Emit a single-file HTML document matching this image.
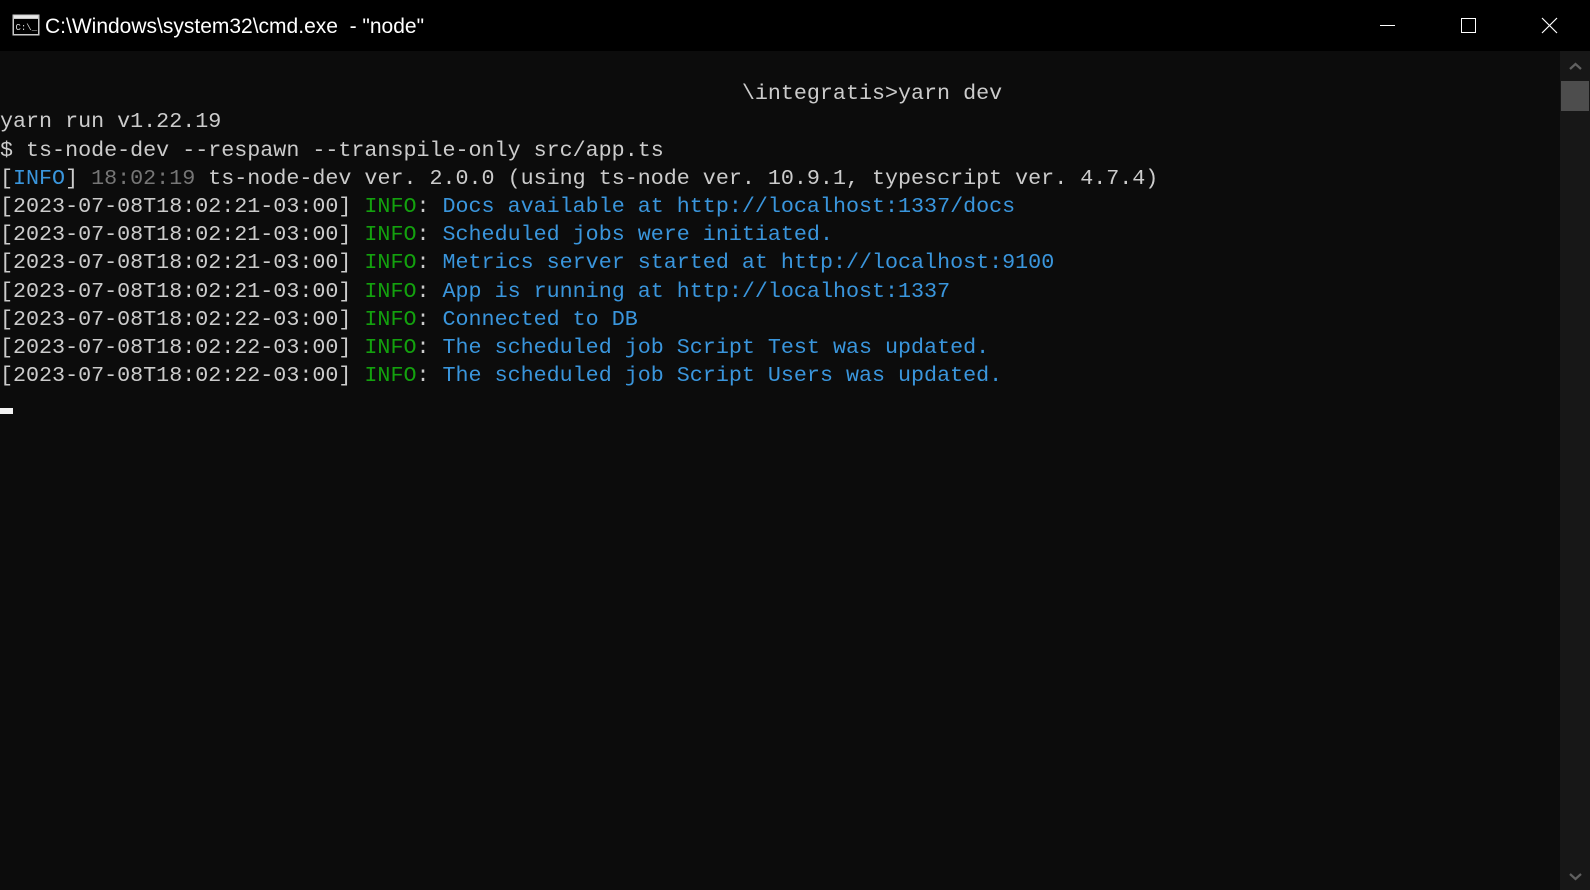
<!DOCTYPE html>
<html><head><meta charset="utf-8"><style>
html,body{margin:0;padding:0;width:1590px;height:890px;overflow:hidden;background:#0c0c0c;}
#title{position:absolute;left:0;top:0;width:1590px;height:51px;background:#000;}
#title .t{position:absolute;left:45px;top:15px;font:21px "Liberation Sans",sans-serif;color:#fff;white-space:pre;}
#term{position:absolute;left:0;top:51px;width:1560px;height:839px;background:#0c0c0c;}
pre{margin:0;position:absolute;left:0;top:1px;font-family:"Liberation Mono",monospace;font-size:21.7px;line-height:28.2px;color:#cccccc;}
.g{color:#13a10e}.b{color:#3a96dd}.d{color:#767676}
#sb{position:absolute;left:1560px;top:51px;width:30px;height:839px;background:#171717;}
#thumb{position:absolute;left:1561px;top:81px;width:28px;height:30px;background:#4d4d4d;}
#cur{position:absolute;left:0;top:408px;width:13px;height:6px;background:#f2f2f2;}
</style></head><body>
<div id="title">
<svg style="position:absolute;left:12px;top:14px" width="28" height="22" viewBox="0 0 28 22">
<rect x="0.5" y="0.5" width="27" height="21" fill="#c8c8c8"/>
<rect x="2" y="5" width="24" height="15" fill="#000"/>
<rect x="2" y="1.5" width="24" height="2.5" fill="#e8e8e8"/>
<text x="3.5" y="16" font-family="Liberation Mono,monospace" font-size="9" fill="#ddd">C:\_</text>
</svg>
<div class="t">C:\Windows\system32\cmd.exe  - "node"</div>
<div style="position:absolute;left:1380px;top:25px;width:15px;height:1px;background:#fff"></div>
<div style="position:absolute;left:1461px;top:18px;width:13px;height:13px;border:1px solid #fff"></div>
<svg style="position:absolute;left:1541px;top:17px" width="17" height="17" viewBox="0 0 17 17"><path d="M1 1L16 16M16 1L1 16" stroke="#fff" stroke-width="1.2"/></svg>
</div>
<div id="term">
<pre>

                                                         \integratis&gt;yarn dev
yarn run v1.22.19
$ ts-node-dev --respawn --transpile-only src/app.ts
[<span class="b">INFO</span>] <span class="d">18:02:19</span> ts-node-dev ver. 2.0.0 (using ts-node ver. 10.9.1, typescript ver. 4.7.4)
[2023-07-08T18:02:21-03:00] <span class="g">INFO</span>: <span class="b">Docs available at http://localhost:1337/docs</span>
[2023-07-08T18:02:21-03:00] <span class="g">INFO</span>: <span class="b">Scheduled jobs were initiated.</span>
[2023-07-08T18:02:21-03:00] <span class="g">INFO</span>: <span class="b">Metrics server started at http://localhost:9100</span>
[2023-07-08T18:02:21-03:00] <span class="g">INFO</span>: <span class="b">App is running at http://localhost:1337</span>
[2023-07-08T18:02:22-03:00] <span class="g">INFO</span>: <span class="b">Connected to DB</span>
[2023-07-08T18:02:22-03:00] <span class="g">INFO</span>: <span class="b">The scheduled job Script Test was updated.</span>
[2023-07-08T18:02:22-03:00] <span class="g">INFO</span>: <span class="b">The scheduled job Script Users was updated.</span>
</pre>
</div>
<div id="cur"></div>
<div id="sb"></div>
<div id="thumb"></div>
<svg style="position:absolute;left:1569px;top:62px" width="13" height="9" viewBox="0 0 13 9"><path d="M1 7L6.5 2L12 7" stroke="#606060" stroke-width="2.2" fill="none"/></svg>
<svg style="position:absolute;left:1569px;top:872px" width="13" height="9" viewBox="0 0 13 9"><path d="M1 2L6.5 7L12 2" stroke="#606060" stroke-width="2.2" fill="none"/></svg>
</body></html>
